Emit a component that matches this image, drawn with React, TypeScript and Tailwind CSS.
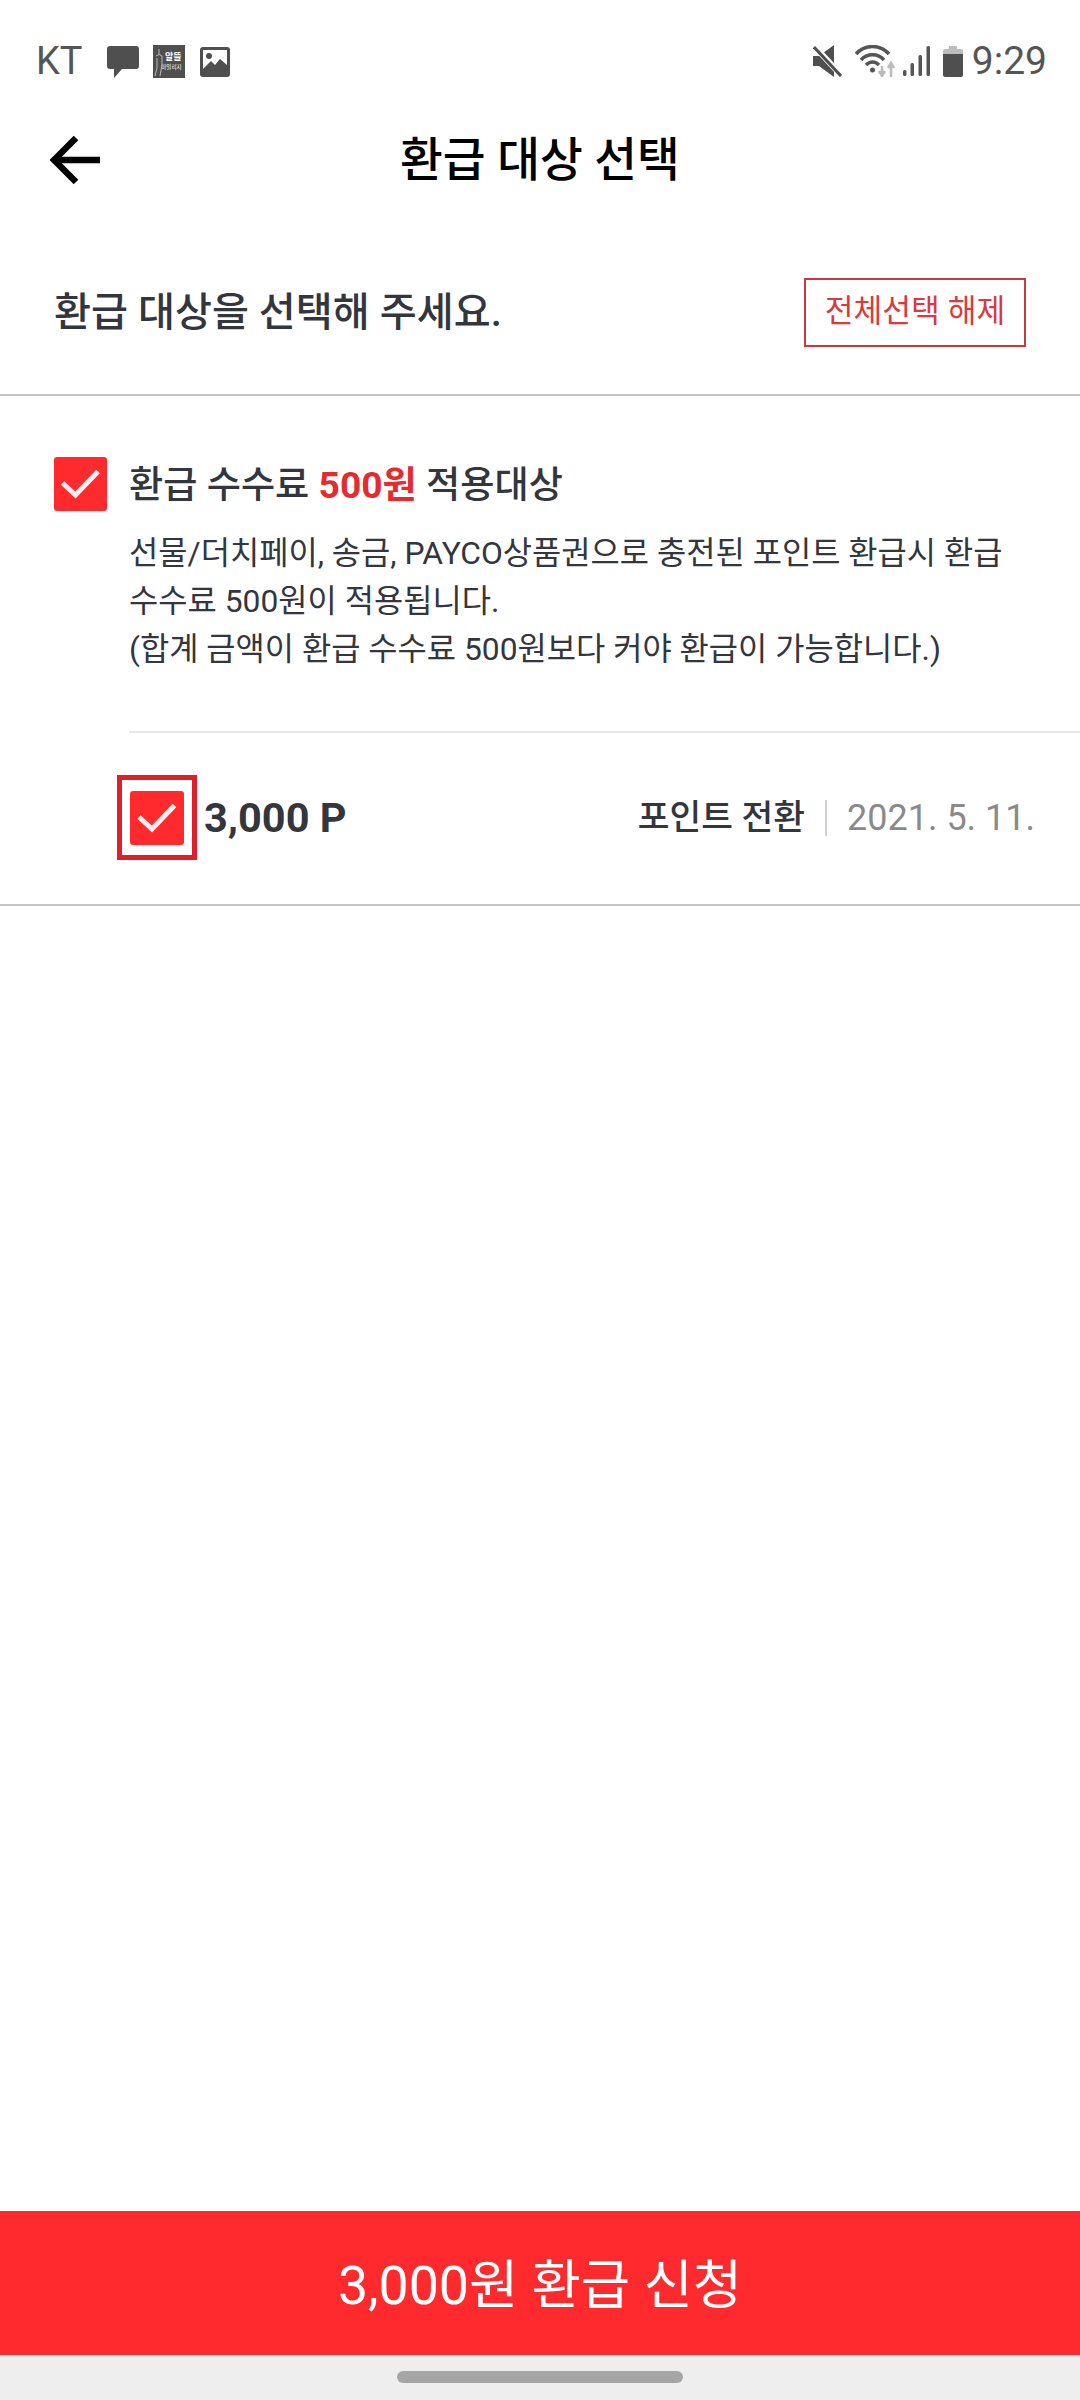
const FONT = "font-['Roboto','Noto_Sans_CJK_KR',sans-serif]";

function Check({ className }: { className: string }) {
  return (
    <div className={`rounded-[3px] bg-[#ff2a2d] ${className}`}>
      <svg className="h-full w-full" viewBox="0 0 53 54" fill="none">
        <path d="M8.500 26 L21.500 38 L44 14.500" stroke="#ffecec" strokeWidth="5" />
      </svg>
    </div>
  );
}

function StatusLeft() {
  return (
    <div className="flex items-center">
      <span className="text-[38px] leading-[44px] text-[#555]">KT</span>
      <svg className="mt-[2px] ml-[24px]" width="32" height="32" viewBox="0 0 32 32">
        <path d="M3 0 H29 Q32 0 32 3 V20 Q32 23 29 23 H15 L7 32 V23 H3 Q0 23 0 20 V3 Q0 0 3 0 Z" fill="#4f4f4f" />
      </svg>
      <div className="relative mt-[1px] ml-[14px] flex h-[33px] w-[32px] flex-col items-end justify-center bg-[#4f4f4f] pr-[3px] text-white">
        <svg className="absolute top-[3px] left-[1px]" width="9" height="29" viewBox="0 0 9 29" fill="none">
          <path d="M5 1 V6 M2 8 Q5 5 8 8 V17 L6 28 M3 10 V20 L1 28" stroke="#bbb" strokeWidth="1" />
        </svg>
        <span className="text-[9px] leading-[11px] font-bold">알뜰</span>
        <span className="text-[5.500px] leading-[9px] whitespace-nowrap">마일리지</span>
      </div>
      <svg className="mt-[1px] ml-[15px]" width="30" height="30" viewBox="0 0 30 30">
        <rect width="30" height="30" rx="3" fill="#4f4f4f" />
        <rect x="3" y="3" width="24" height="19" fill="#fff" />
        <circle cx="9" cy="9" r="3" fill="#4f4f4f" />
        <path d="M3 22 L11 14 L15 18 L20 12 L27 18 V24 H3 Z" fill="#4f4f4f" />
      </svg>
    </div>
  );
}

function StatusRight() {
  return (
    <div className="flex items-center">
      <svg width="30" height="32" viewBox="0 0 30 32">
        <path d="M0 11 H6 L21 0 V32 L6 21 H0 Z" fill="#4f4f4f" />
        <path d="M2 2 L28 30" stroke="#fff" strokeWidth="6" />
        <path d="M1 2 L28 31" stroke="#4f4f4f" strokeWidth="3" />
      </svg>
      <svg className="ml-[12px]" width="42" height="32" viewBox="0 0 42 32" fill="none">
        <path d="M1 9 C10 -1 25 -1 34 9" stroke="#555" strokeWidth="3.500" />
        <path d="M6 15 C12 8 23 8 29 15" stroke="#555" strokeWidth="3.500" />
        <path d="M11 20 C15 16 20 16 24 20" stroke="#555" strokeWidth="3.500" />
        <circle cx="17.500" cy="25" r="2.500" fill="#555" />
        <path d="M27 21 V30 M24 26 L27 31 L30 26" stroke="#bbb" strokeWidth="2.500" />
        <path d="M36 32 V19 M33 23 L36 18 L39 23" stroke="#bbb" strokeWidth="2.500" />
      </svg>
      <svg className="ml-[6px]" width="27" height="30" viewBox="0 0 27 30">
        <rect x="0" y="24" width="3.500" height="6" rx="1.500" fill="#555" />
        <rect x="7.500" y="17" width="3.500" height="13" rx="1.500" fill="#555" />
        <rect x="15.500" y="9" width="3.500" height="21" rx="1.500" fill="#555" />
        <rect x="23.500" y="0" width="3.500" height="30" rx="1.500" fill="#555" />
      </svg>
      <svg className="ml-[13px]" width="20" height="31" viewBox="0 0 20 31">
        <path d="M6 0 H14 V3 H18 Q20 3 20 5 V8 H0 V5 Q0 3 2 3 H6 Z" fill="#bdbdbd" />
        <path d="M0 8 H20 V29 Q20 31 18 31 H2 Q0 31 0 29 Z" fill="#4f4f4f" />
      </svg>
      <span className="ml-[9px] text-[39px] leading-[44px] text-[#555]">9:29</span>
    </div>
  );
}

export default function App() {
  return (
    <div className={`flex h-[2400px] w-[1080px] flex-col bg-white ${FONT}`}>
      <div className="flex h-[120px] items-center justify-between pt-[2px] pr-[33px] pl-[36px]">
        <StatusLeft />
        <StatusRight />
      </div>

      <header className="relative flex h-[80px] items-center justify-center">
        <svg className="absolute top-[15px] left-[50px]" width="50" height="50" viewBox="0 0 50 50" fill="none">
          <path d="M50 25 H5 M26 3 L4 25 L26 47" stroke="#000" strokeWidth="6.500" />
        </svg>
        <h1 className="text-[46.500px] leading-[60px] font-medium text-black">환급 대상 선택</h1>
      </header>

      <section className="flex items-center justify-between border-b-2 border-[#c4c4c4] pt-[78px] pr-[54px] pb-[47px] pl-[54px]">
        <p className="pt-[1px] text-[40.200px] leading-[56px] font-medium text-[#33363d]">환급 대상을 선택해 주세요.</p>
        <button className="flex h-[69px] w-[222px] items-center justify-center border-2 border-[#c9393e] text-[31.300px] text-[#d83a40]">
          전체선택 해제
        </button>
      </section>

      <section className="border-b-2 border-[#c4c4c4]">
        <div className="flex pt-[61px] pl-[54px]">
          <Check className="h-[54px] w-[53px]" />
          <div className="ml-[22px] flex-1">
            <p className="pt-[1px] text-[37.200px] leading-[54px] font-medium text-[#33363d]">
              환급 수수료 <span className="font-bold text-[#e42c30]">500원</span> 적용대상
            </p>
            <p className="mt-[17px] pr-[45px] text-[31.800px] leading-[48px] text-[#33363d]">
              선물/더치페이, 송금, PAYCO상품권으로 충전된 포인트 환급시 환급 수수료 500원이 적용됩니다.
              <br />
              (합계 금액이 환급 수수료 500원보다 커야 환급이 가능합니다.)
            </p>
            <div className="mt-[58px] h-[2px] bg-[#e8e8e8]" />
          </div>
        </div>
        <div className="flex items-center pt-[42px] pr-[45px] pb-[44px] pl-[117px]">
          <div className="flex h-[85px] w-[80px] items-center justify-center border-[5px] border-[#e01f2a]">
            <Check className="h-[54px] w-[54px]" />
          </div>
          <span className="ml-[7px] flex-1 text-[41.500px] leading-[56px] font-bold text-[#33363d]">3,000 P</span>
          <span className="text-[34.500px] font-medium text-[#33363d]">포인트 전환</span>
          <span className="mx-[20px] h-[36px] w-[2px] bg-[#cfcfcf]" />
          <span className="text-[36px] text-[#8a8a8a]">2021. 5. 11.</span>
        </div>
      </section>

      <div className="flex-1" />

      <button className="flex h-[144px] items-center justify-center bg-[#ff2a2d] pt-[6px] text-[53.600px] text-white">
        3,000원 환급 신청
      </button>
      <div className="flex h-[45px] items-start justify-center bg-[#eeeeee] pt-[16px]">
        <div className="h-[12px] w-[286px] rounded-full bg-[#a6a6a6]" />
      </div>
    </div>
  );
}
